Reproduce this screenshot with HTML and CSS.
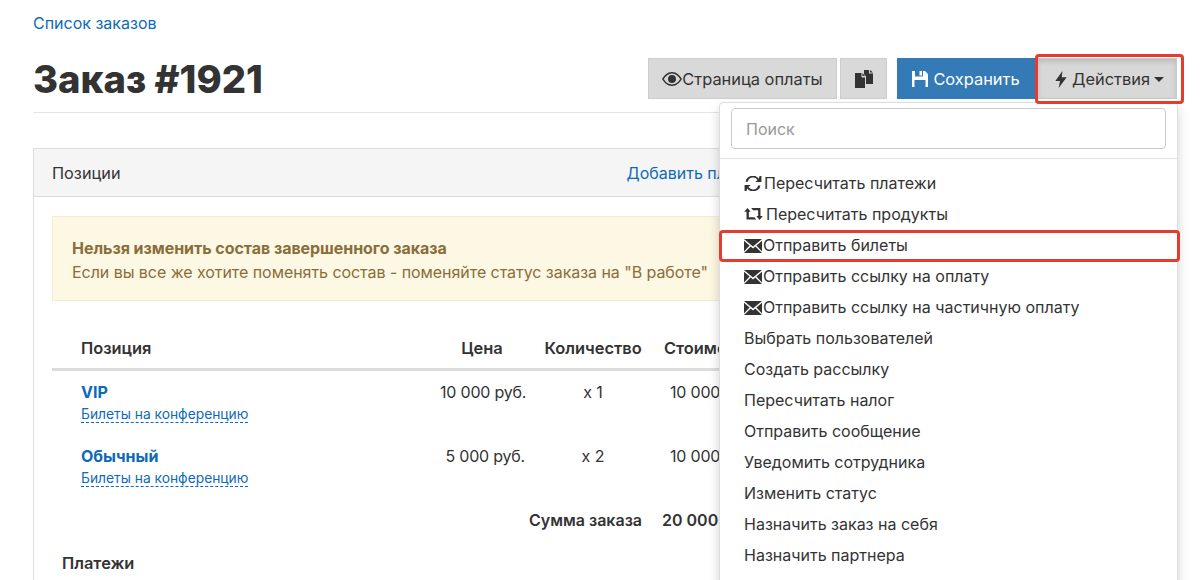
FILE: index.html
```html
<!DOCTYPE html>
<html lang="ru">
<head>
<meta charset="utf-8">
<title>Заказ #1921</title>
<link rel="stylesheet" href="styles.css">
</head>
<body>
<svg class="defs" width="0" height="0" aria-hidden="true">
  <symbol id="i-mail" viewBox="0 0 18 14"><path d="M0 0h18L9 7.600zM0 1.800l5.600 4.800L0 12.400zM18 1.800v10.600l-5.600-5.800zM6.700 7.600 9 9.600l2.300-2L18 14H0z"/></symbol>
  <symbol id="i-eye" viewBox="0 0 20 14"><path fill-rule="evenodd" d="M10 0c4.600 0 8 3.400 10 7-2 3.600-5.400 7-10 7S2 10.600 0 7c2-3.600 5.400-7 10-7zm0 1.500C6.400 1.500 3.600 4 1.800 7c1.800 3 4.600 5.500 8.200 5.500S16.400 10 18.200 7C16.400 4 13.600 1.500 10 1.500zM10 3a4 4 0 1 1 0 8 4 4 0 0 1 0-8z"/></symbol>
  <symbol id="i-copy" viewBox="0 0 18 18"><path d="M0 3h6.500v3.500a1 1 0 0 0 1 1H10V18H0zM7.500 3l2.500 3H7.500zM9 0h5v3.500h4V14h-7V6.500L9 4zM15 0l3 2.500h-3z"/></symbol>
  <symbol id="i-save" viewBox="0 0 16 16"><path fill-rule="evenodd" d="M0 0h3v5.500h8V0h2l3 3v13h-2.500V9h-11v7H0zM7.500 0H10v4.500H7.500z"/></symbol>
  <symbol id="i-bolt" viewBox="0 0 12 18"><path d="M7.500 0 0 10.500h5L3.500 18 12 6.500H6.800z"/></symbol>
  <symbol id="i-refresh" viewBox="0 0 18 16"><path d="M16 0l2 0v6.500h-6.500l2.300-2.300A5.700 5.700 0 0 0 3.500 6H1A8 8 0 0 1 15.100 2.800zM2 16H0V9.500h6.500L4.200 11.800A5.700 5.700 0 0 0 14.500 10H17A8 8 0 0 1 2.900 13.200z"/></symbol>
  <symbol id="i-retweet" viewBox="0 0 20 14"><path d="M3.500 0 7 4H5v6h6l2 2.500H2.500V4H0zM7.500 0H17.500v8.500H20l-3.500 4.500L13 8.500h2V2.500H9.500z"/></symbol>
</svg>
<div class="page">
  <a class="crumb" href="#">Список заказов</a>
  <header class="head">
    <h1 class="title">Заказ #1921</h1>
    <div class="toolbar">
      <div class="btn-group-a">
        <button class="btn btn-grey btn-pay"><svg class="ic ic-eye"><use href="#i-eye"/></svg>Страница оплаты</button>
        <button class="btn btn-grey btn-icon"><svg class="ic ic-copy"><use href="#i-copy"/></svg></button>
      </div>
      <div class="btn-group-b">
        <button class="btn btn-blue"><svg class="ic ic-save"><use href="#i-save"/></svg>Сохранить</button>
        <button class="btn btn-open"><svg class="ic ic-bolt"><use href="#i-bolt"/></svg>Действия<span class="caret"></span></button>
      </div>
    </div>
  </header>

  <section class="panel">
    <div class="panel-head">
      <span>Позиции</span>
      <a href="#" class="add-link">Добавить платеж</a>
    </div>
    <div class="panel-body">
      <div class="alert">
        <strong>Нельзя изменить состав завершенного заказа</strong>
        <div>Если вы все же хотите поменять состав - поменяйте статус заказа на "В работе"</div>
      </div>
      <table class="items">
        <thead>
          <tr>
            <th class="c-name">Позиция</th>
            <th class="c-price">Цена</th>
            <th class="c-qty">Количество</th>
            <th class="c-sum">Стоимость</th>
          </tr>
        </thead>
        <tbody>
          <tr>
            <td class="c-name"><a class="item-link" href="#">VIP</a><br><a class="sub-link" href="#">Билеты на конференцию</a></td>
            <td class="c-price">10 000 руб.</td>
            <td class="c-qty">x 1</td>
            <td class="c-sum">10 000 руб.</td>
          </tr>
          <tr>
            <td class="c-name"><a class="item-link" href="#">Обычный</a><br><a class="sub-link" href="#">Билеты на конференцию</a></td>
            <td class="c-price">5 000 руб.</td>
            <td class="c-qty">x 2</td>
            <td class="c-sum">10 000 руб.</td>
          </tr>
          <tr class="total">
            <td colspan="3">Сумма заказа</td>
            <td class="c-sum">20 000 руб.</td>
          </tr>
        </tbody>
      </table>
      <h3 class="pay-title">Платежи</h3>
    </div>
  </section>
</div>

<div class="menu">
  <div class="menu-search"><input class="search" type="text" placeholder="Поиск"></div>
  <ul class="menu-list">
    <li><svg class="ic ic-refresh"><use href="#i-refresh"/></svg>Пересчитать платежи</li>
    <li><svg class="ic ic-retweet"><use href="#i-retweet"/></svg>Пересчитать продукты</li>
    <li><svg class="ic ic-mail"><use href="#i-mail"/></svg>Отправить билеты</li>
    <li><svg class="ic ic-mail"><use href="#i-mail"/></svg>Отправить ссылку на оплату</li>
    <li><svg class="ic ic-mail"><use href="#i-mail"/></svg>Отправить ссылку на частичную оплату</li>
    <li>Выбрать пользователей</li>
    <li>Создать рассылку</li>
    <li>Пересчитать налог</li>
    <li>Отправить сообщение</li>
    <li>Уведомить сотрудника</li>
    <li>Изменить статус</li>
    <li>Назначить заказ на себя</li>
    <li>Назначить партнера</li>
  </ul>
</div>
<div class="mark mark-btn"></div>
<div class="mark mark-row"></div>
</body>
</html>
```

FILE: styles.css
```css
* { box-sizing: border-box; }
html, body { height: 580px; overflow: hidden; }
body { margin: 0; background: #fff; color: #333; font: 16px/1.4 Inter, "Noto Sans", sans-serif; position: relative; }
a { color: #0e6ab8; text-decoration: none; }
.defs { position: absolute; }
.page { width: 1177px; padding: 12px 0 0 33px; }
.crumb { display: block; line-height: 22px; }
.head { display: flex; justify-content: space-between; align-items: flex-start; height: 79px; padding-top: 24px; border-bottom: 1px solid #e6e6e6; }
.title { margin: -2px 0 0; font-size: 38.2px; line-height: 46px; font-weight: 800; color: #333; }
.toolbar { display: flex; gap: 10px; }
.btn-group-a { display: flex; gap: 3px; }
.btn-group-b { display: flex; }
.btn { height: 41px; font: inherit; font-size: 16.4px; color: #333; border: 1px solid #ccc; background: #e0e0e0; padding: 1px 0 0; display: flex; align-items: center; justify-content: center; white-space: nowrap; }
.btn-grey { background: #d9d9d9; border-color: #cdcdcd; }
.btn-pay { width: 189px; }
.btn-icon { width: 47px; }
.btn-blue { width: 140px; background: #337ab7; border-color: #337ab7; color: #fff; padding-right: 2px; }
.btn-open { width: 140px; padding-left: 5px; background: #d8d8d8; border-color: #c8c8c8; box-shadow: inset 0 3px 5px rgba(0,0,0,.125); }
.ic { fill: currentColor; flex: none; }
.ic-eye { width: 20px; height: 14px; }
.ic-copy { width: 18px; height: 18px; }
.ic-save { width: 16px; height: 16px; margin-right: 5px; }
.ic-bolt { width: 12px; height: 17px; margin-right: 5px; }
.caret { width: 0; height: 0; margin-left: 4px; border-top: 5px solid currentColor; border-left: 5px solid transparent; border-right: 5px solid transparent; }
.panel { margin-top: 35px; border: 1px solid #ddd; height: 460px; }
.panel-head { height: 48px; background: #f5f5f5; border-bottom: 1px solid #ddd; display: flex; align-items: center; padding: 2px 18px 0; gap: 506px; font-size: 16.3px; }
.add-link { white-space: nowrap; font-size: 16px; }
.panel-body { padding: 19px 18px 0; }
.alert { height: 85px; background: #fcf8e3; border: 1px solid #faebcc; color: #8a6d3b; padding: 19px 19px 0; line-height: 24px; letter-spacing: -.05px; }
.alert strong { font-weight: 700; }
.items { margin-top: 28px; border-collapse: collapse; table-layout: fixed; width: 800px; }
.items th { height: 40px; font-size: 16.4px; font-weight: 600; padding: 0 10px; border-bottom: 3px solid #ddd; white-space: nowrap; }
.items th.c-sum { padding-left: 12px; }
.items td { padding: 11px 10px 10px; vertical-align: top; line-height: 21px; white-space: nowrap; }
.c-name { width: 378px; text-align: left; }
.items .c-name { padding-left: 29px; }
.c-price { width: 104px; text-align: center; }
.items td.c-price { text-align: right; padding-right: 9px; letter-spacing: -.2px; }
.c-qty { width: 118px; text-align: center; }
.c-sum { width: 200px; text-align: left; }
.items td.c-sum { padding-left: 18px; letter-spacing: -.2px; }
.item-link { font-weight: 700; }
.sub-link { font-size: 13.8px; border-bottom: 1px dashed #0e6ab8; }
.items .total td { text-align: right; font-weight: 600; padding-top: 11px; padding-bottom: 0; letter-spacing: 0; }
.items .total td.c-sum { text-align: left; padding-left: 10px; }
.pay-title { margin: 21px 0 0 10px; font-size: 16.4px; font-weight: 600; }
.menu { position: absolute; left: 719px; top: 102px; width: 459px; height: 520px; background: #fff; border: 1px solid #ddd; border-radius: 4px; box-shadow: 0 6px 12px rgba(0,0,0,.175); }
.menu-search { padding: 5px 11px 9px; border-bottom: 1px solid #e5e5e5; }
.search { display: block; width: 100%; height: 41px; font: inherit; border: 1px solid #ccc; border-radius: 4px; padding: 0 14px; color: #333; }
.search::placeholder { color: #999; }
.menu-list { margin: 0; padding: 9px 0 0; list-style: none; }
.menu-list li { height: 31px; line-height: 31px; padding-left: 24px; display: flex; align-items: center; color: #333; white-space: nowrap; }
.ic-refresh { width: 18px; height: 15px; margin-right: 2px; }
.ic-retweet { width: 19px; height: 13px; margin-right: 3px; }
.ic-mail { width: 18px; height: 14px; margin-right: 1px; color: #333; }
.mark { position: absolute; border: 3px solid #e53c30; border-radius: 4px; pointer-events: none; }
.mark-btn { left: 1035px; top: 54px; width: 149px; height: 50px; }
.mark-row { left: 719px; top: 230px; width: 461px; height: 32px; }
```
